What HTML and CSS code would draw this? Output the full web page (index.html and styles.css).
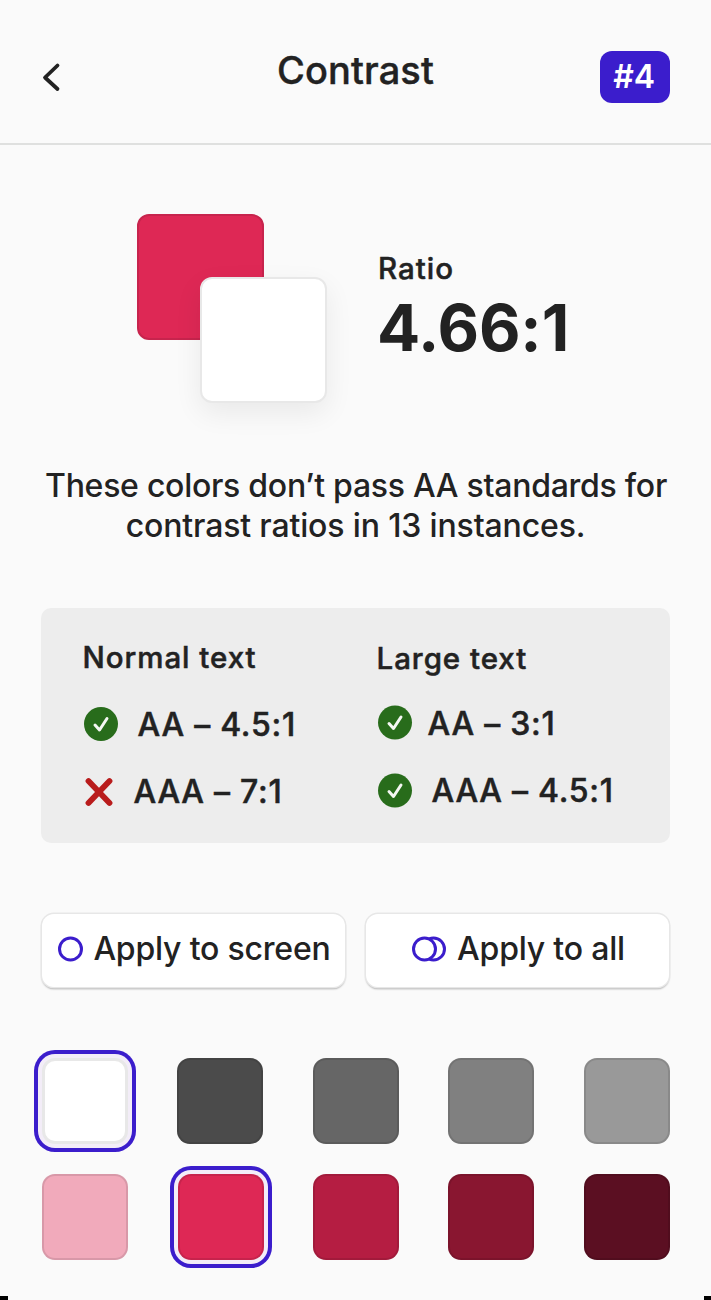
FILE: index.html
```html
<!DOCTYPE html>
<html lang="en">
<head>
<meta charset="utf-8">
<title>Contrast</title>
<link rel="stylesheet" href="styles.css">
</head>
<body>
<main class="screen">
  <header class="header">
    <svg class="back" width="20" height="30" viewBox="0 0 20 30"><path d="M16.500 3.500 4 15.500l12.500 11.500" fill="none" stroke="#222" stroke-width="3.800" stroke-linecap="round" stroke-linejoin="round"/></svg>
    <h1 class="title">Contrast</h1>
    <span class="badge">#4</span>
  </header>
  <section class="summary">
    <div class="pair"><div class="tile tile-red"></div><div class="tile tile-white"></div></div>
    <div class="ratio"><div class="ratio-label">Ratio</div><div class="ratio-value">4.66:1</div></div>
  </section>
  <p class="message"><span class="line line-one">These colors don’t pass AA standards for</span><span class="line line-two">contrast ratios in 13 instances.</span></p>
  <section class="results">
    <div class="column">
      <h2 class="heading">Normal text</h2>
      <div class="result"><svg class="icon" width="36" height="36" viewBox="0 0 36 36"><circle cx="17" cy="18" r="17" fill="#286c1b"/><path d="m11 19 4.500 5L23 12.500" fill="none" stroke="#f4f7f3" stroke-width="3" stroke-linecap="round" stroke-linejoin="round"/></svg><span class="level normal-aa">AA – 4.5:1</span></div>
      <div class="result"><svg class="icon" width="36" height="36" viewBox="0 0 36 36"><path d="m4.500 7 21 22m0-22-21 22" fill="none" stroke="#b91c1c" stroke-width="5.800" stroke-linecap="round"/></svg><span class="level normal-aaa">AAA – 7:1</span></div>
    </div>
    <div class="column column-large">
      <h2 class="heading heading-large">Large text</h2>
      <div class="result"><svg class="icon" width="36" height="36" viewBox="0 0 36 36"><circle cx="17" cy="17.500" r="17" fill="#286c1b"/><path d="m11 18.500 4.500 5L23 12" fill="none" stroke="#f4f7f3" stroke-width="3" stroke-linecap="round" stroke-linejoin="round"/></svg><span class="level large-aa">AA – 3:1</span></div>
      <div class="result"><svg class="icon" width="36" height="36" viewBox="0 0 36 36"><circle cx="17" cy="17.500" r="17" fill="#286c1b"/><path d="m11 18.500 4.500 5L23 12" fill="none" stroke="#f4f7f3" stroke-width="3" stroke-linecap="round" stroke-linejoin="round"/></svg><span class="level large-aaa">AAA – 4.5:1</span></div>
    </div>
  </section>
  <div class="actions">
    <button class="button"><svg width="25" height="26" viewBox="0 0 25 26"><circle cx="12.500" cy="13" r="11" fill="none" stroke="#3b1dcc" stroke-width="3"/></svg><span class="label-screen">Apply to screen</span></button>
    <button class="button"><svg width="35" height="26" viewBox="0 0 35 26"><circle cx="21.500" cy="13" r="11" fill="#fff" stroke="#3b1dcc" stroke-width="3"/><circle cx="12.500" cy="13" r="11" fill="#fff" stroke="#3b1dcc" stroke-width="3"/></svg><span class="label-all">Apply to all</span></button>
  </div>
  <div class="palette">
    <div class="swatch white selected"></div>
    <div class="swatch gray-1"></div>
    <div class="swatch gray-2"></div>
    <div class="swatch gray-3"></div>
    <div class="swatch gray-4"></div>
    <div class="swatch red-1"></div>
    <div class="swatch red-2 selected"></div>
    <div class="swatch red-3"></div>
    <div class="swatch red-4"></div>
    <div class="swatch red-5"></div>
  </div>
  <footer class="edge"><span class="corner corner-left"></span><span class="corner"></span></footer>
</main>
</body>
</html>
```
FILE: styles.css
```css
* { box-sizing: border-box; }
body { margin: 0; background: #fafafa; color: #222; font-family: Inter, "Liberation Sans", sans-serif; font-weight: 500; }
h1, h2, p { margin: 0; font-weight: 500; }
svg { display: block; flex: none; }
.screen { width: 711px; height: 1300px; display: flex; flex-direction: column; overflow: hidden; }
.header { flex: none; height: 145px; padding: 45px 41px 0; border-bottom: 2px solid #dfe0df; display: grid; grid-template-columns: 100px 1fr 100px; align-items: start; }
.back { margin-top: 17px; }
.title { font-size: 38px; line-height: 50px; text-align: center; white-space: nowrap; letter-spacing: .1px; -webkit-text-stroke: .4px #222; }
.badge { justify-self: end; width: 70px; height: 52px; margin-top: 6px; border-radius: 12px; background: #3b1dcc; color: #fff; font-size: 32px; font-weight: 600; line-height: 52px; letter-spacing: -.3px; padding-right: 2px; text-align: center; }
.summary { flex: none; height: 258px; padding: 69px 0 0 137px; display: flex; gap: 50px; }
.pair { width: 190px; height: 189px; flex: none; display: grid; grid-template-columns: repeat(3, 1fr); grid-template-rows: repeat(3, 1fr); }
.tile { border-radius: 12px; }
.tile-red { grid-area: 1 / 1 / 3 / 3; background: #de2855; border: 2px solid #c7244d; }
.tile-white { grid-area: 2 / 2 / 4 / 4; background: #fff; border: 2px solid #e8e8e8; box-shadow: 0 10px 28px rgba(0, 0, 0, .07); }
.ratio { padding-top: 34px; white-space: nowrap; }
.ratio-label { padding-left: 1px; font-size: 29.500px; line-height: 40px; letter-spacing: 1px; -webkit-text-stroke: .5px #222; }
.ratio-value { font-size: 64px; line-height: 80px; font-weight: 700; letter-spacing: -.1px; }
.message { flex: none; margin-top: 63px; height: 81px; font-size: 32px; font-weight: 500; line-height: 40px; text-align: center; }
.line { display: block; white-space: nowrap; }
.line-one { letter-spacing: -.27px; padding-left: 1px; }
.line-two { letter-spacing: -.15px; }
.results { flex: none; margin: 61px 41px 0; height: 235px; border-radius: 10px; background: #ededed; display: grid; grid-template-columns: 294px 1fr; padding: 29px 0 0 41px; }
.heading { padding-left: .500px; font-size: 29.500px; line-height: 40px; letter-spacing: .95px; white-space: nowrap; margin-bottom: 29px; -webkit-text-stroke: .5px #222; }
.heading-large { padding-top: 1px; margin-bottom: 27px; }
.result { height: 36px; margin-bottom: 31.500px; padding-left: 1.500px; display: flex; align-items: center; gap: 18px; font-size: 32px; line-height: 36px; white-space: nowrap; letter-spacing: .75px; -webkit-text-stroke: .5px #222; }
.level { padding-top: 1px; }
.normal-aaa, .large-aa { margin-left: -4px; }
.actions { flex: none; margin: 71px 42px 0; display: grid; grid-template-columns: 1fr 1fr; gap: 21px; }
.button { height: 73px; padding: 0 0 3px 2px; border: 0; border-radius: 12px; background: #fff; box-shadow: 0 0 0 1.500px #e7e7e7, 0 2px 2px 0 #999; display: flex; align-items: center; justify-content: center; gap: 10px; color: #222; font-family: inherit; font-size: 32px; font-weight: 500; line-height: 40px; white-space: nowrap; letter-spacing: -.2px; }
.palette { flex: none; margin: 70.500px 41px 0 41.500px; display: grid; grid-template-columns: repeat(5, 86px); justify-content: space-between; row-gap: 30.500px; }
.swatch { height: 86px; border-radius: 13px; border: 2px solid rgba(0, 0, 0, .1); }
.selected { box-shadow: 0 0 0 4px #f3edf8, 0 0 0 8px #3b1dcc; }
.white { background: #fff; border-width: 3px; border-color: #e8e8e8; }
.gray-1 { background: #4b4b4b; }
.gray-2 { background: #666; }
.gray-3 { background: #808080; }
.gray-4 { background: #999; }
.red-1 { background: #f1aabb; }
.red-2 { background: #de2855; position: relative; left: 1px; }
.red-3 { background: #b51d42; }
.red-4 { background: #891630; }
.red-5 { background: #5b0f22; }
.edge { margin-top: auto; height: 4px; flex: none; display: flex; justify-content: space-between; }
.corner { width: 7px; background: #000; }
.corner-left { width: 8px; }
```
